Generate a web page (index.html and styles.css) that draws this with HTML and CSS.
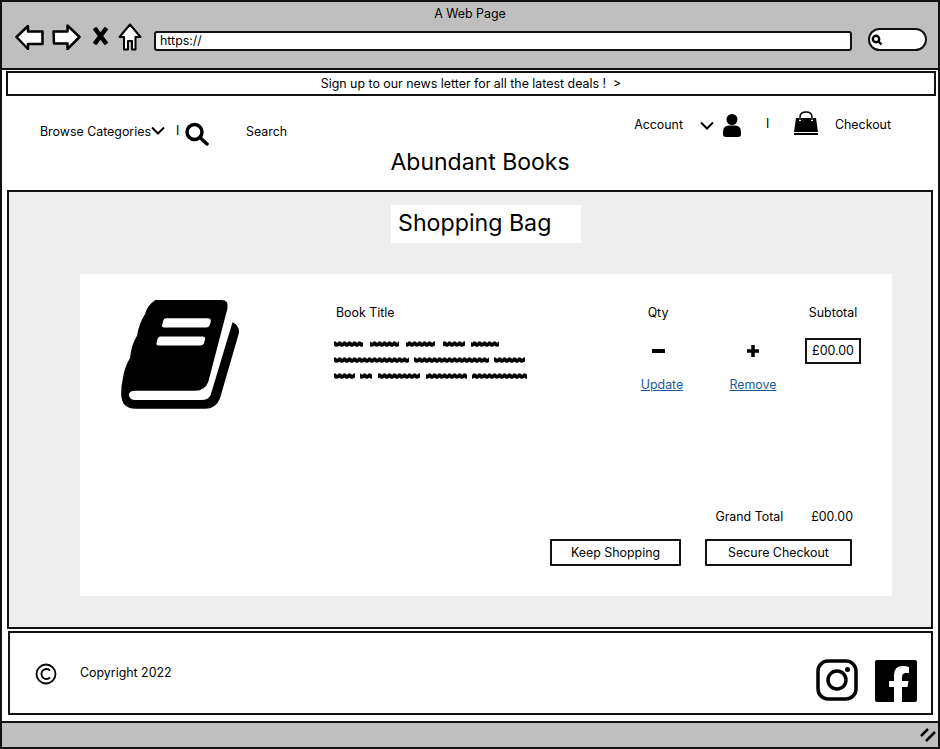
FILE: index.html
```html
<!DOCTYPE html>
<html lang="en">
<head>
<meta charset="utf-8">
<title>Abundant Books</title>
<link rel="stylesheet" href="styles.css">
</head>
<body>
<div class="window">
  <div class="chrome">
    <div class="chrome-title">A Web Page</div>
    <div class="toolbar">
      <svg class="ico-arrow" viewBox="0 0 29 26"><path d="M1.500 13 13 2V7.500H27.500V20H13V25Z"/></svg>
      <svg class="ico-arrow ico-fwd" viewBox="0 0 29 26"><path d="M1.500 7.500H15.500V1.500L27.500 13 15.500 25V19.500H2Z"/></svg>
      <svg class="ico-x" viewBox="0 0 17 18"><path d="M2.500 1 14.500 17M14.500 1 2.500 17"/></svg>
      <svg class="ico-home" viewBox="0 0 24 28"><path d="M1.500 14 12 1.500 22.500 14H17.500V26.500H14V18H10V26.500H6V14Z"/></svg>
      <div class="address">https://</div>
      <div class="pill"><svg class="ico-mini" viewBox="0 0 12 12"><circle cx="5" cy="5" r="3.200"/><path d="M7.500 7.500 10.500 10.500"/></svg></div>
    </div>
  </div>
  <div class="banner">Sign up to our news letter for all the latest deals !&nbsp; &gt;</div>

  <header class="site-head">
    <div class="topbar">
      <nav class="nav-left">
        <span>Browse Categories</span>
        <svg class="chev chev-a" viewBox="0 0 14 9"><path d="M1 1.500 7 7.500 13 1.500"/></svg>
        <span class="sep sep-a">I</span>
        <svg class="ico-search" viewBox="0 0 24 24"><circle cx="9.500" cy="10" r="7.500"/><path d="M15 15.500 22 22"/></svg>
        <span class="nav-search">Search</span>
      </nav>
      <nav class="nav-right">
        <span>Account</span>
        <svg class="chev chev-b" viewBox="0 0 14 9"><path d="M1 1.500 7 7.500 13 1.500"/></svg>
        <svg class="ico-user" viewBox="0 0 18 23"><circle cx="9" cy="5.500" r="5.500"/><path d="M0 18Q0 11.500 6 11.500H12Q18 11.500 18 18V20Q18 23 15 23H3Q0 23 0 20Z"/></svg>
        <span class="sep sep-b">I</span>
        <svg class="ico-bag" viewBox="0 0 24 24"><path d="M6 9V6Q6 1 12 1T18 6V9" fill="none" stroke="#000" stroke-width="1.500"/><path d="M2 7H5V10H7V7H17V10H19V7H22L24 21H0ZM0 22H24V24H0Z"/></svg>
        <span class="nav-checkout">Checkout</span>
      </nav>
    </div>
    <h1 class="brand">Abundant Books</h1>
  </header>

  <main class="panel">
    <h2 class="page-title">Shopping Bag</h2>
    <section class="card">
      <div class="item">
        <svg class="book" viewBox="120 85 362 335"><path d="M225 88H425Q447 88 443 112L385 335Q375 362 345 362H165Q145 362 145 375 148 390 165 390H365Q385 390 392 375L458 155Q478 165 478 185L420 385Q408 416 375 416H165Q122 416 122 370 122 345 127 325 132 290 149 262 152 225 170 195 175 160 194 130 200 105 225 88Z"/><path class="book-band" d="M258 143H383Q395 143 392 155L389 164Q387 171 378 171H252Q243 171 246 162L249 150Q251 143 258 143ZM240 198H367Q378 198 375 208L372 218Q370 225 360 225H235Q226 225 229 216L232 205Q234 198 240 198Z"/></svg>
        <div class="col-title">Book Title</div>
        <div class="col-qty">Qty</div>
        <div class="col-sub">Subtotal</div>
        <svg class="desc" viewBox="0 0 196 45">
          <defs><pattern id="wave" width="5" height="9" patternUnits="userSpaceOnUse" patternTransform="translate(0 1)"><path d="M-1 5.500Q1 2 2.500 4T6 3.500" fill="none" stroke="#000" stroke-width="3.800"/></pattern></defs>
          <g fill="url(#wave)">
            <rect x="1" y="1" width="29" height="8"/><rect x="37" y="1" width="29" height="8"/><rect x="73" y="1" width="29" height="8"/><rect x="110" y="1" width="22" height="8"/><rect x="138" y="1" width="28" height="8"/>
          </g>
          <g fill="url(#wave)" transform="translate(0 16)">
            <rect x="1" y="1" width="75" height="8"/><rect x="81" y="1" width="75" height="8"/><rect x="161" y="1" width="31" height="8"/>
          </g>
          <g fill="url(#wave)" transform="translate(0 32)">
            <rect x="1" y="1" width="21" height="8"/><rect x="27" y="1" width="12" height="8"/><rect x="45" y="1" width="42" height="8"/><rect x="93" y="1" width="41" height="8"/><rect x="139" y="1" width="55" height="8"/>
          </g>
        </svg>
        <div class="minus"><span class="bar"></span></div>
        <div class="plus"><svg class="ico-plus" viewBox="0 0 14 14"><path d="M7 1V13M1 7H13"/></svg></div>
        <div class="price-box">£00.00</div>
        <a class="link link-update" href="#">Update</a>
        <a class="link link-remove" href="#">Remove</a>
      </div>
      <div class="totals"><span>Grand Total</span><span>£00.00</span></div>
      <div class="actions">
        <button class="btn btn-keep" type="button">Keep Shopping</button>
        <button class="btn btn-secure" type="button">Secure Checkout</button>
      </div>
    </section>
  </main>

  <footer class="site-foot">
    <svg class="ico-copy" viewBox="0 0 22 22"><circle cx="11" cy="11" r="9.500"/><path d="M15 7.500A5 5 0 1 0 15 14.500"/></svg>
    <span class="copy-text">Copyright 2022</span>
    <svg class="ico-insta" viewBox="0 0 42 42"><rect x="2" y="2" width="38" height="38" rx="10"/><circle cx="21" cy="21" r="9"/><circle class="insta-dot" cx="31.500" cy="10.500" r="2.500"/></svg>
    <svg class="ico-fb" viewBox="0 0 42 42"><rect width="42" height="42" rx="2"/><path class="fb-f" d="M27 42V27H32.500L33.500 21H27V17Q27 13 31 13H34V7Q31 6 28 6 19 6 19 15V21H14V27H19V42Z"/></svg>
  </footer>

  <div class="status">
    <svg class="grip" viewBox="0 0 16 14"><path d="M1 8 8 1M6 13 15 4"/></svg>
  </div>
</div>
</body>
</html>
```

FILE: styles.css
```css
* { box-sizing: border-box; }
html, body { margin: 0; padding: 0; }
body { background: #fff; color: #000; font-family: "Inter", "Open Sans", sans-serif; font-size: 12.400px; }
svg { display: block; flex: none; }

.window { width: 940px; height: 749px; border: 2px solid #111; display: flex; flex-direction: column; overflow: hidden; }

.chrome { height: 68px; background: #bfbfbf; border-bottom: 2px solid #111; flex: none; }
.chrome-title { height: 24px; line-height: 24px; text-align: center; }
.toolbar { display: flex; align-items: center; padding-left: 13px; height: 26px; }
.ico-arrow { width: 29px; height: 26px; margin-top: -4px; fill: #fff; stroke: #000; stroke-width: 2.500; stroke-linejoin: round; }
.ico-fwd { margin-left: 8px; }
.ico-x { width: 17px; height: 18px; margin: -6px 0 0 11px; fill: none; stroke: #000; stroke-width: 4.500; }
.ico-home { width: 24px; height: 28px; margin: -4px 0 0 9px; fill: #fff; stroke: #000; stroke-width: 2; stroke-linejoin: round; }
.address { width: 698px; height: 20px; margin: 4px 0 0 12px; padding-left: 4px; line-height: 16px; background: #fff; border: 2px solid #111; border-radius: 3px; }
.pill { width: 59px; height: 23px; margin: 1px 0 0 16px; padding: 4px 0 0 1px; background: #fff; border: 2px solid #111; border-radius: 12px; }
.ico-mini { width: 12px; height: 12px; fill: none; stroke: #000; stroke-width: 2.400; }

.banner { height: 25px; margin: 1px 2px 0 4px; border: 2px solid #111; line-height: 21px; text-align: center; flex: none; }

.site-head { height: 94px; flex: none; padding-top: 14px; }
.topbar { display: flex; justify-content: space-between; align-items: flex-start; height: 37px; }
.nav-left { display: flex; align-items: center; height: 28px; margin: 7px 0 0 38px; }
.nav-right { display: flex; align-items: center; height: 28px; padding-right: 47px; }
.chev { width: 14px; height: 9px; fill: none; stroke: #000; stroke-width: 2; }
.chev-a { margin: -2px 0 0 0; }
.sep { width: 3px; line-height: 1; }
.sep-a { margin-left: 11px; }
.ico-search { width: 24px; height: 24px; margin: 6px 0 0 6px; fill: none; stroke: #000; stroke-width: 3.500; stroke-linecap: round; }
.nav-search { margin-left: 37px; }
.chev-b { margin: 3px 0 0 17px; }
.ico-user { width: 18px; height: 23px; margin: 3px 0 0 9px; }
.sep-b { margin-left: 25px; }
.ico-bag { width: 24px; height: 24px; margin: -3px 0 0 25px; }
.nav-checkout { margin-left: 17px; }
.brand { margin: 0; padding-left: 20px; font-size: 23px; font-weight: 400; line-height: 30px; text-align: center; }

.panel { width: 926px; height: 439px; margin-left: 5px; padding-top: 13px; background: #eee; border: 2px solid #111; flex: none; }
.page-title { width: 190px; height: 38px; margin: 0 0 0 382px; padding-left: 7px; font-size: 23.200px; font-weight: 400; line-height: 36px; background: #fff; }
.card { width: 812px; height: 322px; margin: 31px 0 0 71px; padding-top: 25px; background: #fff; }

.item { display: grid; grid-template-columns: 40px 213px 287px 76px 109px 56px; grid-template-rows: 26px 52px 14px 19px; justify-items: center; align-items: center; height: 111px; }
.book { grid-column: 2; grid-row: 1 / 5; justify-self: start; align-self: start; width: 121px; height: 111px; }
.book-band { fill: #fff; }
.col-title { grid-column: 3; grid-row: 1; justify-self: start; padding-left: 3px; }
.col-qty { grid-column: 4; grid-row: 1; }
.col-sub { grid-column: 6; grid-row: 1; }
.desc { grid-column: 3; grid-row: 2 / 4; justify-self: start; align-self: start; width: 196px; height: 45px; margin-top: 14px; }
.minus { grid-column: 4; grid-row: 2; }
.bar { display: block; width: 13px; height: 4px; background: #000; }
.plus { grid-column: 5; grid-row: 2; padding-left: 5px; }
.ico-plus { width: 14px; height: 14px; fill: none; stroke: #000; stroke-width: 3.500; }
.price-box { grid-column: 6; grid-row: 2; width: 56px; height: 26px; line-height: 22px; text-align: center; border: 2px solid #111; }
.link { color: #1a5a9a; text-decoration: underline; }
.link-update { grid-column: 4; grid-row: 3; padding-left: 8px; }
.link-remove { grid-column: 5; grid-row: 3; padding-left: 5px; }

.totals { display: flex; justify-content: flex-end; gap: 28px; height: 20px; margin-top: 97px; padding-right: 39px; line-height: 20px; }
.actions { display: flex; justify-content: flex-end; gap: 24px; margin-top: 12px; padding-right: 40px; }
.btn { height: 27px; padding: 0 0 1px; font: inherit; color: #000; background: #fff; border: 2px solid #111; border-radius: 1px; }
.btn-keep { width: 131px; }
.btn-secure { width: 147px; }

.site-foot { display: flex; align-items: center; width: 925px; height: 84px; margin: 2px 0 0 6px; padding: 0 14px 0 25px; border: 2px solid #111; flex: none; }
.ico-copy { width: 22px; height: 22px; margin-top: 2px; fill: none; stroke: #000; stroke-width: 1.800; }
.copy-text { margin: 0 auto 2px 23px; }
.ico-insta { width: 42px; height: 42px; margin-top: 13px; fill: none; stroke: #000; stroke-width: 3.500; }
.insta-dot { fill: #000; stroke: none; }
.ico-fb { width: 42px; height: 42px; margin: 15px 0 0 17px; }
.fb-f { fill: #fff; }

.status { display: flex; justify-content: flex-end; align-items: center; flex: 1; margin-top: 6px; padding-right: 2px; background: #bfbfbf; border-top: 2px solid #111; }
.grip { width: 16px; height: 14px; fill: none; stroke: #000; stroke-width: 2.500; }
```
